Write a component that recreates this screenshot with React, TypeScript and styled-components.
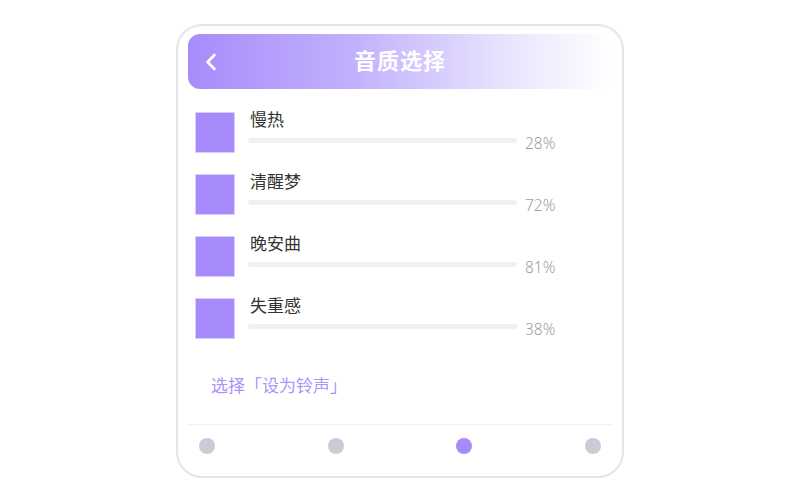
import React from "react";
import styled, { createGlobalStyle } from "styled-components";

const GlobalStyle = createGlobalStyle`
	html, body {
		margin: 0;
		padding: 0;
		background: #ffffff;
	}
	body {
		font-family: "Noto Sans", "Noto Sans CJK SC", sans-serif;
	}
`;

const Page = styled.div`
	width: 800px;
	height: 500px;
	display: flex;
	justify-content: center;
	padding-top: 24px;
	box-sizing: border-box;
`;

const Phone = styled.div`
	width: 448px;
	height: 454px;
	box-sizing: border-box;
	border: 2px solid #e4e5e9;
	border-radius: 26px;
	padding: 8px 10px 0;
	display: flex;
	flex-direction: column;
	background: #fff;
`;

const Header = styled.div`
	height: 55px;
	flex-shrink: 0;
	border-radius: 12px;
	background: linear-gradient(90deg, #a88bfa 0%, #c2b2fd 40%, #e9e3fe 75%, #ffffff 100%);
	display: flex;
	align-items: center;
	position: relative;
	justify-content: center;
`;

const BackButton = styled.div`
	position: absolute;
	left: 17px;
	top: 50%;
	transform: translateY(-50%);
	width: 16px;
	height: 20px;
	display: flex;
	align-items: center;
`;

const Title = styled.h1`
	margin: -5px 0 0;
	font-family: "Noto Sans CJK SC", sans-serif;
	font-size: 22px;
	font-weight: 700;
	line-height: 26px;
	color: #ffffff;
	letter-spacing: 1px;
`;

const List = styled.div`
	display: flex;
	flex-direction: column;
	gap: 22px;
	padding: 23px 0 0 7px;
`;

const Row = styled.div`
	display: flex;
	align-items: flex-start;
	gap: 13px;
	height: 40px;
`;

const Cover = styled.div`
	width: 40px;
	height: 41px;
	box-sizing: border-box;
	background: #a88bfa;
	border: 1px solid #d9cdfd;
	flex-shrink: 0;
`;

const Info = styled.div`
	display: flex;
	flex-direction: column;
`;

const Name = styled.div`
	font-family: "Noto Sans CJK SC", sans-serif;
	font-size: 17px;
	font-weight: 400;
	line-height: 20px;
	color: #333333;
	margin-top: -3px;
	padding-left: 2px;
`;

const Progress = styled.div`
	display: flex;
	align-items: center;
	margin-top: 2px;
	height: 20px;
`;

const Track = styled.div`
	width: 269px;
	height: 5px;
	border-radius: 3px;
	background: #edf0f4;
	margin-top: -1px;
`;

const Percent = styled.span`
	font-family: "Noto Sans", sans-serif;
	font-size: 15.5px;
	font-weight: 300;
	line-height: 20px;
	color: #9a9ea8;
	margin-left: 8px;
	margin-top: 3px;
`;

const Action = styled.div`
	font-family: "Noto Sans CJK SC", sans-serif;
	font-size: 17px;
	color: #ad93fb;
	padding: 36px 0 0 23px;
	line-height: 22px;
`;

const Divider = styled.div`
	height: 1px;
	background: #f0f1f3;
	margin-top: 28px;
`;

const Dots = styled.div`
	display: flex;
	justify-content: space-between;
	padding: 13px 11px 0;
`;

const Dot = styled.span<{ active?: boolean }>`
	width: 16px;
	height: 16px;
	border-radius: 50%;
	background: ${(props) => (props.active ? "#a88bfa" : "#c8ccd4")};
`;

interface TrackItem {
	name: string;
	percent: number;
}

const tracks: TrackItem[] = [
	{ name: "慢热", percent: 28 },
	{ name: "清醒梦", percent: 72 },
	{ name: "晚安曲", percent: 81 },
	{ name: "失重感", percent: 38 },
];

export default function App() {
	return (
		<>
			<GlobalStyle />
			<Page>
				<Phone>
					<Header>
						<BackButton>
							<svg width="12" height="18" viewBox="0 0 12 18" fill="none">
								<path d="M9.5 2 L2.5 9 L9.5 16" stroke="#fff" strokeWidth="2.6" strokeLinecap="round" strokeLinejoin="round" />
							</svg>
						</BackButton>
						<Title>音质选择</Title>
					</Header>
					<List>
						{tracks.map((t) => (
							<Row key={t.name}>
								<Cover />
								<Info>
									<Name>{t.name}</Name>
									<Progress>
										<Track />
										<Percent>{t.percent}%</Percent>
									</Progress>
								</Info>
							</Row>
						))}
					</List>
					<Action>选择「设为铃声」</Action>
					<Divider />
					<Dots>
						<Dot />
						<Dot />
						<Dot active />
						<Dot />
					</Dots>
				</Phone>
			</Page>
		</>
	);
}
